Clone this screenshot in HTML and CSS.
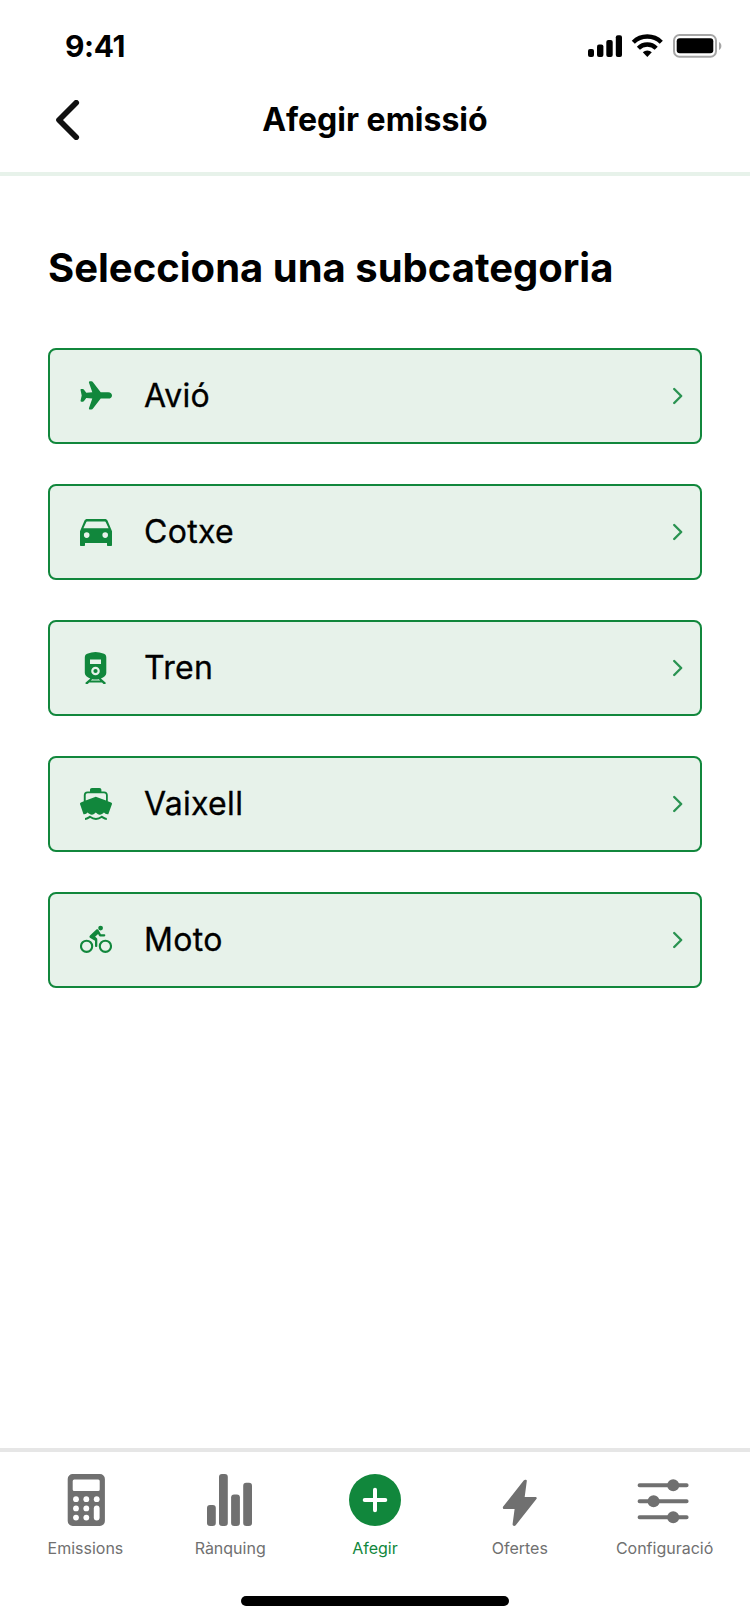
FILE: index.html
```html
<!DOCTYPE html>
<html lang="ca">
<head>
<meta charset="utf-8">
<title>Afegir emissió</title>
<link rel="stylesheet" href="styles.css">
</head>
<body>
<div class="screen">
  <div class="status">
    <span class="time">9:41</span>
    <svg class="status-icons" viewBox="0 0 136 26" width="136" height="26">
      <rect x="1" y="16" width="6" height="8" rx="2"/>
      <rect x="10" y="11.5" width="6.4" height="12.5" rx="2"/>
      <rect x="19.3" y="7" width="6.4" height="17" rx="2"/>
      <rect x="28.8" y="2.3" width="6.2" height="21.7" rx="2"/>
      <g fill="none" stroke="#000" stroke-width="4.4">
        <path d="M46.3 9.2a20 20 0 0 1 28 0"/>
        <path d="M51.4 15.2a12.7 12.7 0 0 1 17.800 0"/>
      </g>
      <path d="M55.800 19.300a6.500 6.500 0 0 1 9 0l-4.500 4.700z"/>
      <rect x="87" y="2" width="42" height="21.700" rx="5.500" fill="none" stroke="#a6a6a6" stroke-width="2"/>
      <rect x="89.700" y="5.300" width="36.600" height="14.900" rx="3"/>
      <path d="M132 9v8c3.200-1.400 3.200-6.600 0-8z" fill="#a6a6a6"/>
    </svg>
  </div>
  <header class="header">
    <svg class="back" viewBox="0 0 24 40" width="24" height="40"><path d="M20.200 2.800 3 20l17.200 17.200" fill="none" stroke="#111" stroke-width="5.700" stroke-linecap="round" stroke-linejoin="round"/></svg>
    <h1 class="title">Afegir emissió</h1>
  </header>
  <main class="content">
    <h2 class="heading">Selecciona una subcategoria</h2>
    <div class="list">
      <a class="card">
        <svg class="icon" viewBox="0 0 32 32"><path d="M9 2.800C8.700 1.800 9.300 1.300 10.200 1.300h1.100c.8 0 1.300.3 1.700.9L20.700 12.200h7.500c2.400 0 3.800 1.700 3.800 3.200s-1.400 3.200-3.800 3.200h-7.500L13 28.600c-.4.6-.9.900-1.700.9h-1.100c-.9 0-1.500-.5-1.200-1.500l3.300-9.400-6-.5-2.300 3c-.3.4-.7.600-1.200.600H1.400c-.700 0-1-.5-.8-1.200l1.100-5.100L.6 10.300C.4 9.600.7 9.100 1.400 9.100h1.400c.5 0 .9.200 1.200.6l2.300 3 6-.5z"/></svg>
        <span class="label">Avió</span>
        <svg class="chevron" viewBox="0 0 12 20"><path d="m2.200 3 7 7-7 7"/></svg>
      </a>
      <a class="card">
        <svg class="icon" viewBox="0 0 32 32"><path fill-rule="evenodd" d="M7.400 3h17.200c1.500 0 2.500.6 3.100 2L32 15.300V29c0 .7-.4 1-1 1h-3c-.7 0-1-.4-1-1v-2H5v2c0 .7-.4 1-1 1H1c-.7 0-1-.4-1-1V15.300L4.300 5c.6-1.400 1.600-2 3.100-2zm0 2.600c-.7 0-1 .2-1.300.9L3.400 12.300h25.200l-2.700-5.800c-.3-.7-.6-.9-1.300-.9zM6.700 16.300a2.800 2.800 0 1 0 0 5.600 2.800 2.800 0 0 0 0-5.600zm18.500 0a2.800 2.800 0 1 0 0 5.600 2.800 2.800 0 0 0 0-5.600z"/></svg>
        <span class="label">Cotxe</span>
        <svg class="chevron" viewBox="0 0 12 20"><path d="m2.200 3 7 7-7 7"/></svg>
      </a>
      <a class="card">
        <svg class="icon" viewBox="0 0 32 32"><path fill-rule="evenodd" d="M11.500.5Q15.500-.5 19.500.5l3.700.9c2 .5 3.100 1.800 3.100 4v15.600c0 2.700-2.400 4.400-5.400 5.600l4.600 4c.6.600.2 1.400-.5 1.400h-1.500L22 30.600H9.200L7.700 32H6.200c-.7 0-1.100-.8-.5-1.400l4.600-4c-3-1.200-5.500-2.900-5.500-5.600V5.400c0-2.200 1.200-3.500 3.200-4zM10 7.400v4.600h11V7.400zM15.500 14.700a4.300 4.300 0 1 0 0 8.600 4.300 4.300 0 0 0 0-8.600zM12.300 27.200l-1.500 1.400h9.400l-1.500-1.400q-3.200.6-6.400 0z"/><circle cx="15.500" cy="19" r="2.100"/></svg>
        <span class="label">Tren</span>
        <svg class="chevron" viewBox="0 0 12 20"><path d="m2.200 3 7 7-7 7"/></svg>
      </a>
      <a class="card">
        <svg class="icon" viewBox="0 0 32 32"><path fill-rule="evenodd" d="M10 3.400V2c0-1.300.7-2 2-2h7.400c1.300 0 2 .7 2 2v1.400H24c2.500 0 3.800 1.300 3.800 3.800v6l3.300 1.200c.8.300 1.100 1.100.8 1.900l-3.600 9.900c-2.300.3-3.300-.8-4.400-1.700-1.500 1.300-2.500 2.200-4.100 2.200-1.800 0-2.700-1.200-4-2.200-1.300 1-2.200 2.200-4 2.200-1.600 0-2.600-.9-4.100-2.200-1.100.9-2.100 2-4.200 1.700L.1 16.300c-.3-.8 0-1.600.8-1.900l2.900-1.200v-6c0-2.500 1.300-3.800 3.700-3.800zM5.700 12.500 15.800 8.700 26 12.500V7.400c0-1.400-.7-2.100-2-2.100H7.600c-1.300 0-1.900.7-1.900 2.100z"/><path d="M5 31c2.200 0 3-.9 4.900-2.200 2 1.400 3.200 2.200 6 2.200s4-.8 6-2.200c1.900 1.300 2.700 2.200 4.900 2.200" fill="none" stroke="#11873c" stroke-width="2"/></svg>
        <span class="label">Vaixell</span>
        <svg class="chevron" viewBox="0 0 12 20"><path d="m2.200 3 7 7-7 7"/></svg>
      </a>
      <a class="card">
        <svg class="icon" viewBox="0 0 32 32"><g fill="none" stroke="#11873c" stroke-width="2.100"><circle cx="6.600" cy="22.300" r="5.600"/><circle cx="25.400" cy="22.300" r="5.600"/></g><circle cx="20.600" cy="4.100" r="2.400"/><path d="M16.100 5.800c1.100-.8 2.100-.5 2.700.6l2.100 3.900h3.400c1.400 0 1.400 2.200 0 2.200h-4c-.7 0-1-.2-1.300-.8l-.9-1.600-3 2.700 1.300 1c.7.500.9 1 .9 1.900v6.200c0 1.400-2.300 1.400-2.300 0v-5.100l-4.700-2.700c-1.100-.7-1.100-1.700-.3-2.500z"/></svg>
        <span class="label">Moto</span>
        <svg class="chevron" viewBox="0 0 12 20"><path d="m2.200 3 7 7-7 7"/></svg>
      </a>
    </div>
  </main>
  <nav class="tabs">
    <a class="tab">
      <svg class="tab-icon" viewBox="-1 0 52 52"><path fill-rule="evenodd" d="M12.700 0h27.200a5 5 0 0 1 5 5v42a5 5 0 0 1-5 5H12.700a5 5 0 0 1-5-5V5a5 5 0 0 1 5-5zm1.500 5.500a1.500 1.500 0 0 0-1.500 1.500v8.500a1.500 1.500 0 0 0 1.500 1.500h24a1.500 1.500 0 0 0 1.500-1.500V7a1.500 1.500 0 0 0-1.500-1.500z"/><g fill="#fff"><circle cx="16" cy="25.200" r="2.900"/><circle cx="26.300" cy="25.200" r="2.900"/><circle cx="36.700" cy="25.200" r="2.900"/><circle cx="16" cy="34.400" r="2.900"/><circle cx="26.300" cy="34.400" r="2.900"/><circle cx="16" cy="43.600" r="2.900"/><circle cx="26.300" cy="43.600" r="2.900"/><rect x="33.800" y="31.500" width="5.800" height="15" rx="2.900"/></g></svg>
      <span>Emissions</span>
    </a>
    <a class="tab">
      <svg class="tab-icon" viewBox="-1 0 52 52"><rect x="2" y="31" width="8.800" height="21" rx="3"/><rect x="14" width="8.800" height="52" rx="3"/><rect x="26.100" y="20.600" width="8.800" height="31.400" rx="3"/><rect x="38.200" y="8.700" width="8.800" height="43.300" rx="3"/></svg>
      <span>Rànquing</span>
    </a>
    <a class="tab active">
      <svg class="tab-icon" viewBox="0 0 52 52"><circle cx="26" cy="26" r="26"/><path d="M26 15.700v20.600M15.700 26h20.600" stroke="#fff" stroke-width="4" stroke-linecap="round"/></svg>
      <span>Afegir</span>
    </a>
    <a class="tab">
      <svg class="tab-icon" viewBox="-1 0 52 52"><path d="m31.800 7-2.100 15.900h10.700c1.200 0 1.700 1.200 1 2.200L20.700 51.300c-1.200 1.400-3.300.6-3.100-1.200l2-15.100H9.300c-1.400 0-1.900-1.300-1.100-2.400L28.700 6.500c1.100-1.200 3.300-.8 3.100.5z"/></svg>
      <span>Ofertes</span>
    </a>
    <a class="tab">
      <svg class="tab-icon" viewBox="0 0 52 52"><path d="M.6 11.200h47M.6 27.200h47M.6 43.200h47" stroke="#707070" stroke-width="4" stroke-linecap="round"/><circle cx="34.200" cy="11.200" r="6"/><circle cx="14.600" cy="27.200" r="6"/><circle cx="34.200" cy="43.200" r="6"/></svg>
      <span>Configuració</span>
    </a>
  </nav>
  <div class="home"></div>
</div>
</body>
</html>
```
FILE: styles.css
```css
* { box-sizing: border-box; margin: 0; padding: 0; }
body { background: #fff; color: #000; font-family: Inter, "Liberation Sans", sans-serif; }
.screen { width: 750px; height: 1624px; display: flex; flex-direction: column; background: #fff; overflow: hidden; }
.status { height: 88px; display: flex; justify-content: space-between; align-items: flex-start; padding: 33px 27px 0 65px; }
.time { font-size: 30px; line-height: 26px; font-weight: 700; letter-spacing: -0.4px; }
.status-icons { display: block; }
.header { height: 88px; border-bottom: 4px solid #e7f2ea; display: grid; grid-template-columns: 100px 1fr 100px; align-items: center; padding-bottom: 20px; }
.back { margin-left: 56px; }
.title { grid-column: 2; font-size: 32px; line-height: 40px; font-weight: 700; text-align: center; }
.content { flex: 1; padding: 68px 48px 0; }
.heading { font-size: 40px; line-height: 48px; font-weight: 700; white-space: nowrap; }
.list { display: flex; flex-direction: column; gap: 40px; margin-top: 56px; }
.card { height: 96px; display: flex; align-items: center; border: 2px solid #11873c; border-radius: 8px; background: #e7f2ea; padding: 0 16px 0 30px; }
.icon { width: 32px; height: 32px; fill: #11873c; flex: none; }
.label { flex: 1; margin-left: 32px; font-size: 32px; line-height: 40px; font-weight: 400; letter-spacing: 0.3px; -webkit-text-stroke: 0.3px #000; }
.chevron { width: 12px; height: 20px; fill: none; stroke: #2a9351; stroke-width: 2.4; stroke-linecap: round; stroke-linejoin: round; }
.tabs { height: 148px; border-top: 4px solid #e6e6e6; display: grid; grid-template-columns: repeat(5, 1fr); padding: 22px 13px 0; color: #707070; fill: #707070; }
.tab { display: flex; flex-direction: column; align-items: center; gap: 12px; font-size: 16px; line-height: 20px; font-weight: 400; white-space: nowrap; }
.tab-icon { width: 52px; height: 52px; overflow: visible; }
.active { color: #11873c; fill: #11873c; }
.home { width: 268px; height: 10px; border-radius: 5px; background: #000; margin: 0 auto 18px; }
```
